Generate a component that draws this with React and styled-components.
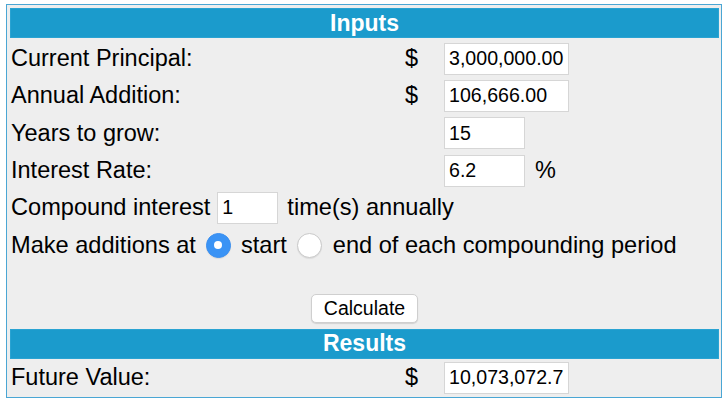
import React from "react";
import styled, { createGlobalStyle } from "styled-components";

const Global = createGlobalStyle`
  html, body { margin: 0; padding: 0; background: #ffffff; }
  body { font-family: "Liberation Sans", Arial, sans-serif; color: #000; }
`;

const Frame = styled.div`
  box-sizing: border-box;
  width: 716px;
  margin: 4px 6px 0;
  border: 1px solid #4aa6d4;
  padding: 3px 2px 1px 3px;
  background: #eeeeee;
  display: flex;
  flex-direction: column;
`;

const Header = styled.div`
  height: 30px;
  background: #1b9bcc;
  box-shadow: inset 0 0 0 1px #2aa3d2;
  color: #fff;
  font-weight: bold;
  font-size: 23px;
  display: flex;
  align-items: center;
  justify-content: center;
  margin-bottom: ${(p) => p.$gap || 0}px;
`;

const Rows = styled.div`
  display: grid;
  grid-template-columns: 394px 40px 1fr;
  grid-auto-rows: 37.3px;
  align-items: center;
`;

const Label = styled.div`
  padding-left: 1px;
  font-size: 23.5px;
  white-space: nowrap;
`;

const Dollar = styled.div`
  font-size: 23.5px;
  padding-left: 1px;
`;

const Cell = styled.div`
  display: flex;
  align-items: center;
  font-size: 23.5px;
`;

const Wide = styled.div`
  grid-column: 1 / -1;
  display: flex;
  align-items: center;
  padding-left: 1px;
  font-size: 23.6px;
  white-space: pre;
`;

const Field = styled.input`
  box-sizing: border-box;
  width: ${(p) => p.$w}px;
  height: 32px;
  border: 1px solid #d6d6d6;
  background: #fff;
  padding: 0 0 0 4px;
  margin: 0 ${(p) => p.$mr || 0}px 0 ${(p) => p.$ml || 0}px;
  font-family: "Liberation Sans", Arial, sans-serif;
  font-size: 19.6px;
  color: #000;
  outline: none;
`;

const Radio = styled.span`
  box-sizing: border-box;
  width: 25px;
  height: 25px;
  border-radius: 50%;
  margin: 0 ${(p) => p.$mr || 10}px 0 ${(p) => p.$ml || 0}px;
  display: inline-flex;
  align-items: center;
  justify-content: center;
  background: ${(p) => (p.$on ? "#3a93f5" : "#fff")};
  border: 1px solid ${(p) => (p.$on ? "#3a8ff0" : "#c9c9c9")};
  box-shadow: 0 1px 1px rgba(0, 0, 0, 0.08);
  &::after {
    content: "";
    display: ${(p) => (p.$on ? "block" : "none")};
    width: 8px;
    height: 8px;
    border-radius: 50%;
    background: #fff;
  }
`;

const Spacer = styled.div`
  height: 27px;
`;

const ButtonRow = styled.div`
  height: 35px;
  display: flex;
  align-items: center;
  justify-content: center;
  margin-bottom: 3px;
`;

const Button = styled.button`
  box-sizing: border-box;
  width: 107px;
  height: 29px;
  background: #fff;
  border: 1px solid #cfcfcf;
  border-radius: 5px;
  box-shadow: 0 1px 1px rgba(0, 0, 0, 0.12);
  font-family: "Liberation Sans", Arial, sans-serif;
  font-size: 19.5px;
  color: #000;
  padding: 0;
`;

const ResultRow = styled.div`
  height: 36px;
  display: grid;
  grid-template-columns: 394px 40px 1fr;
  align-items: center;
`;

export default function App() {
  return (
    <>
      <Global />
      <Frame>
        <Header $gap={2}>Inputs</Header>
        <Rows>
          <Label>Current Principal:</Label>
          <Dollar>$</Dollar>
          <Cell>
            <Field $w={125} defaultValue="3,000,000.00" />
          </Cell>

          <Label>Annual Addition:</Label>
          <Dollar>$</Dollar>
          <Cell>
            <Field $w={125} defaultValue="106,666.00" />
          </Cell>

          <Label>Years to grow:</Label>
          <Dollar />
          <Cell>
            <Field $w={81} defaultValue="15" />
          </Cell>

          <Label>Interest Rate:</Label>
          <Dollar />
          <Cell>
            <Field $w={81} $mr={10} defaultValue="6.2" />%
          </Cell>

          <Wide>
            Compound interest<Field $w={61} $ml={7} $mr={9} defaultValue="1" />time(s) annually
          </Wide>

          <Wide>
            Make additions at<Radio $on $ml={10} />start<Radio $ml={10} $mr={11} />end of each compounding period
          </Wide>
        </Rows>
        <Spacer />
        <ButtonRow>
          <Button>Calculate</Button>
        </ButtonRow>
        <Header $gap={1}>Results</Header>
        <ResultRow>
          <Label>Future Value:</Label>
          <Dollar>$</Dollar>
          <Cell>
            <Field $w={125} defaultValue="10,073,072.7" />
          </Cell>
        </ResultRow>
      </Frame>
    </>
  );
}
